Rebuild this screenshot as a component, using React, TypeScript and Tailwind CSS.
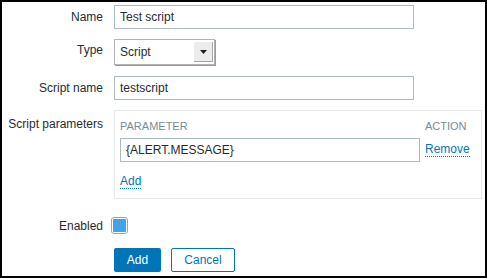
import React from 'react';

const Label: React.FC<{ children: React.ReactNode; className?: string }> = ({ children, className }) => (
  <div className={`w-[112px] shrink-0 pr-[11px] text-right text-[12px] text-[#1f2c33] ${className ?? ''}`}>{children}</div>
);

const TextInput: React.FC<{ value: string; width: string }> = ({ value, width }) => (
  <div className={`${width} h-[24px] border border-[#acbbc2] bg-white pl-[5px] flex items-center text-[12px] text-[#1f2c33]`}>
    {value}
  </div>
);

export default function App() {
  return (
    <div
      className="w-[487px] h-[278px] border-2 border-black bg-white overflow-hidden"
      style={{ fontFamily: '"Liberation Sans", Arial, sans-serif' }}
    >
      <div className="flex flex-col pt-[3px]">
        <div className="flex items-center h-[24px]">
          <Label>Name</Label>
          <TextInput value="Test script" width="w-[300px]" />
        </div>

        <div className="flex items-center h-[26px] mt-[10px]">
          <Label className="-mt-[4px]">Type</Label>
          <div className="w-[101px] h-[26px] flex border border-[#b3b3b3] shadow-[1px_1px_0_#9a9a9a] bg-white">
            <div className="flex-1 flex items-center pl-[5px] text-[12px] text-[#1f2c33]">Script</div>
            <div className="w-[19px] my-[2px] mr-[1px] bg-[#ececec] border-r border-b border-[#a8a8a8] flex items-center justify-center">
              <svg width="7" height="4" viewBox="0 0 7 4">
                <path d="M0 0h7L3.5 4z" fill="#1f1f1f" />
              </svg>
            </div>
          </div>
        </div>

        <div className="flex items-center h-[24px] mt-[11px]">
          <Label>Script name</Label>
          <TextInput value="testscript" width="w-[300px]" />
        </div>

        <div className="flex mt-[10px]">
          <Label className="pt-[5px]">Script parameters</Label>
          <div className="w-[368px] h-[89px] border border-[#e6e9eb] pl-[5px] pt-[9px]">
            <div className="flex text-[11px] text-[#768d99] h-[12px] items-center">
              <div className="w-[305px]">PARAMETER</div>
              <div>ACTION</div>
            </div>
            <div className="flex items-center mt-[6px]">
              <TextInput value="{ALERT.MESSAGE}" width="w-[300px]" />
              <span className="ml-[5px] text-[12px] text-[#0275b8] border-b border-dotted border-[#0275b8] leading-[13px]">Remove</span>
            </div>
            <div className="mt-[6px]">
              <span className="text-[12px] text-[#0275b8] border-b border-dotted border-[#0275b8] leading-[13px]">Add</span>
            </div>
          </div>
        </div>

        <div className="flex items-center h-[17px] mt-[18px]">
          <Label>Enabled</Label>
          <div className="-ml-[3px] w-[17px] h-[17px] rounded-[3px] border border-[#8fa9b8] p-[1px]">
            <div className="w-full h-full bg-[#3ea6e6] rounded-[1px]" />
          </div>
        </div>

        <div className="flex items-center mt-[14px] pl-[112px] gap-[10px]">
          <div className="w-[47px] h-[24px] bg-[#0275b8] text-white text-[12px] flex items-center justify-center rounded-[2px]">
            Add
          </div>
          <div className="w-[64px] h-[24px] border border-[#0275b8] text-[#0275b8] text-[12px] flex items-center justify-center rounded-[2px]">
            Cancel
          </div>
        </div>
      </div>
    </div>
  );
}
